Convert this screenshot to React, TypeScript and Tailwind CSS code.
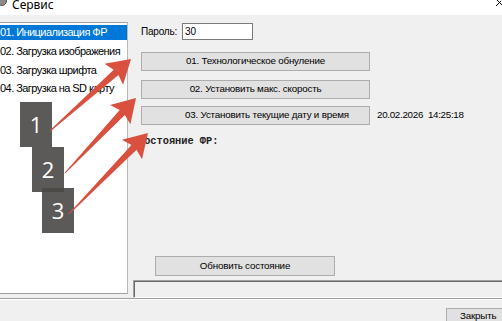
import React from "react";

type Pt = [number, number];

// tapered "annotation" arrow from tail to tip
const arrowPoints = (tail: Pt, tip: Pt) => {
  const dx = tip[0] - tail[0];
  const dy = tip[1] - tail[1];
  const len = Math.hypot(dx, dy);
  const d: Pt = [dx / len, dy / len];
  const n: Pt = [-d[1], d[0]];
  const H = 23;
  const W = 14;
  const b: Pt = [tip[0] - d[0] * H, tip[1] - d[1] * H];
  const j: Pt = [b[0] + d[0] * 3, b[1] + d[1] * 3];
  const pts: Pt[] = [
    [tail[0] + n[0] * 0.5, tail[1] + n[1] * 0.5],
    [j[0] + n[0] * 3.5, j[1] + n[1] * 3.5],
    [b[0] + n[0] * W, b[1] + n[1] * W],
    tip,
    [b[0] - n[0] * W, b[1] - n[1] * W],
    [j[0] - n[0] * 3.5, j[1] - n[1] * 3.5],
    [tail[0] - n[0] * 0.5, tail[1] - n[1] * 0.5],
  ];
  return pts.map((p) => `${p[0].toFixed(1)},${p[1].toFixed(1)}`).join(" ");
};

const items = [
  "01. Инициализация ФР",
  "02. Загрузка изображения",
  "03. Загрузка шрифта",
  "04. Загрузка на SD карту",
];

const WinButton = ({
  children,
  className = "",
}: {
  children: React.ReactNode;
  className?: string;
}) => (
  <div
    className={`h-[19px] bg-[#e1e1e1] border border-[#adadad] flex items-center justify-center text-[9.8px] tracking-[-0.2px] text-black ${className}`}
  >
    {children}
  </div>
);

const App = () => {
  return (
    <div className="relative w-[502px] h-[321px] overflow-hidden bg-[#f0f0f0] font-['Liberation_Sans',sans-serif] text-black">
      {/* Title bar */}
      <div className="h-[15px] bg-white flex items-start relative">
        <div className="absolute left-[-3px] top-[-4px] w-[10px] h-[10px] rounded-full bg-[#8a8a8a] border border-[#555]" />
        <span className="ml-[12px] mt-[-2px] leading-[14px] text-[12px] font-['Noto_Sans',sans-serif] text-black">
          Сервис
        </span>
        <svg className="absolute right-0 top-0" width="6" height="6" viewBox="0 0 6 6">
          <line x1="0" y1="6" x2="5" y2="1" stroke="#000" strokeWidth="1" />
          <line x1="1" y1="0" x2="6" y2="5" stroke="#000" strokeWidth="1" />
        </svg>
      </div>

      {/* Main area */}
      <div className="flex h-[283px]">
        {/* List box */}
        <div className="mt-[7px] ml-[-2px] w-[130px] h-[272px] bg-white border border-[#a0a0a0] border-r-[#b9b9b9] pt-[1px] overflow-hidden">
          {items.map((t, i) => (
            <div key={t} className="h-[18.7px] flex items-start pt-[1px]">
              <div
                className={`w-full h-[15px] flex items-center whitespace-nowrap pl-[1px] text-[11px] tracking-[-0.55px] ${
                  i === 0 ? "bg-[#0078d7] text-white" : ""
                }`}
              >
                {t}
              </div>
            </div>
          ))}
        </div>

        {/* Right column */}
        <div className="flex-1 flex flex-col">
          <div className="flex items-center mt-[8px] ml-[13px]">
            <span className="text-[10px] tracking-[-0.2px] w-[41px]">Пароль:</span>
            <div className="w-[71px] h-[17px] bg-white border border-[#7a7a7a] flex items-center pl-[2px] text-[10px]">
              30
            </div>
          </div>

          <WinButton className="ml-[13px] mt-[12px] w-[229px]">
            01. Технологическое обнуление
          </WinButton>
          <WinButton className="ml-[13px] mt-[9px] w-[229px]">
            02. Установить макс. скорость
          </WinButton>
          <div className="flex items-center mt-[7px] ml-[13px]">
            <WinButton className="w-[229px] !justify-start pl-[43px]">
              03. Установить текущие дату и время
            </WinButton>
            <span className="ml-[7px] text-[9.8px] tracking-[-0.3px] whitespace-pre">20.02.2026  14:25:18</span>
          </div>

          <div className="ml-[10px] mt-[10px] h-[12px] leading-[12px] text-[10.3px] font-bold font-['Liberation_Mono',monospace] text-[#222]">
            Состояние ФР:
          </div>

          <div className="flex-1" />

          <WinButton className="ml-[27px] w-[180px] h-[20px]">Обновить состояние</WinButton>
          <div className="ml-[5px] mt-[4px] mr-[-4px] h-[18px] border border-t-[#a0a0a0] border-l-[#a0a0a0] border-b-white border-r-white bg-[#f0f0f0] shadow-[inset_1px_1px_0_#696969]" />
        </div>
      </div>

      {/* Separator */}
      <div className="h-[2px] border-t border-[#a0a0a0] border-b border-b-white" />

      {/* Footer */}
      <div className="flex justify-end">
        <WinButton className="mt-[8px] mr-[-10px] w-[66px] h-[22px] !items-start !justify-start pl-[13px] pt-[1px] leading-[12px]">
          Закрыть
        </WinButton>
      </div>

      {/* Number badges */}
      <div className="absolute left-[20px] top-[102px] w-[32px] h-[45px] bg-[#4a4846]/90 flex items-center justify-center text-white text-[22px] font-['Open_Sans',sans-serif]">
        1
      </div>
      <div className="absolute left-[32px] top-[147px] w-[32px] h-[45px] bg-[#4a4846]/90 flex items-center justify-center text-white text-[22px] font-['Open_Sans',sans-serif]">
        2
      </div>
      <div className="absolute left-[42px] top-[188px] w-[32px] h-[45px] bg-[#4a4846]/90 flex items-center justify-center text-white text-[22px] font-['Open_Sans',sans-serif]">
        3
      </div>

      {/* Arrows */}
      <svg className="absolute inset-0 pointer-events-none" width="502" height="321">
        <polygon points={arrowPoints([50, 131], [131, 59])} fill="#d9503f" />
        <polygon points={arrowPoints([65, 173], [136, 98])} fill="#d9503f" />
        <polygon points={arrowPoints([69, 214], [148, 133])} fill="#d9503f" />
      </svg>
    </div>
  );
};

export default App;
